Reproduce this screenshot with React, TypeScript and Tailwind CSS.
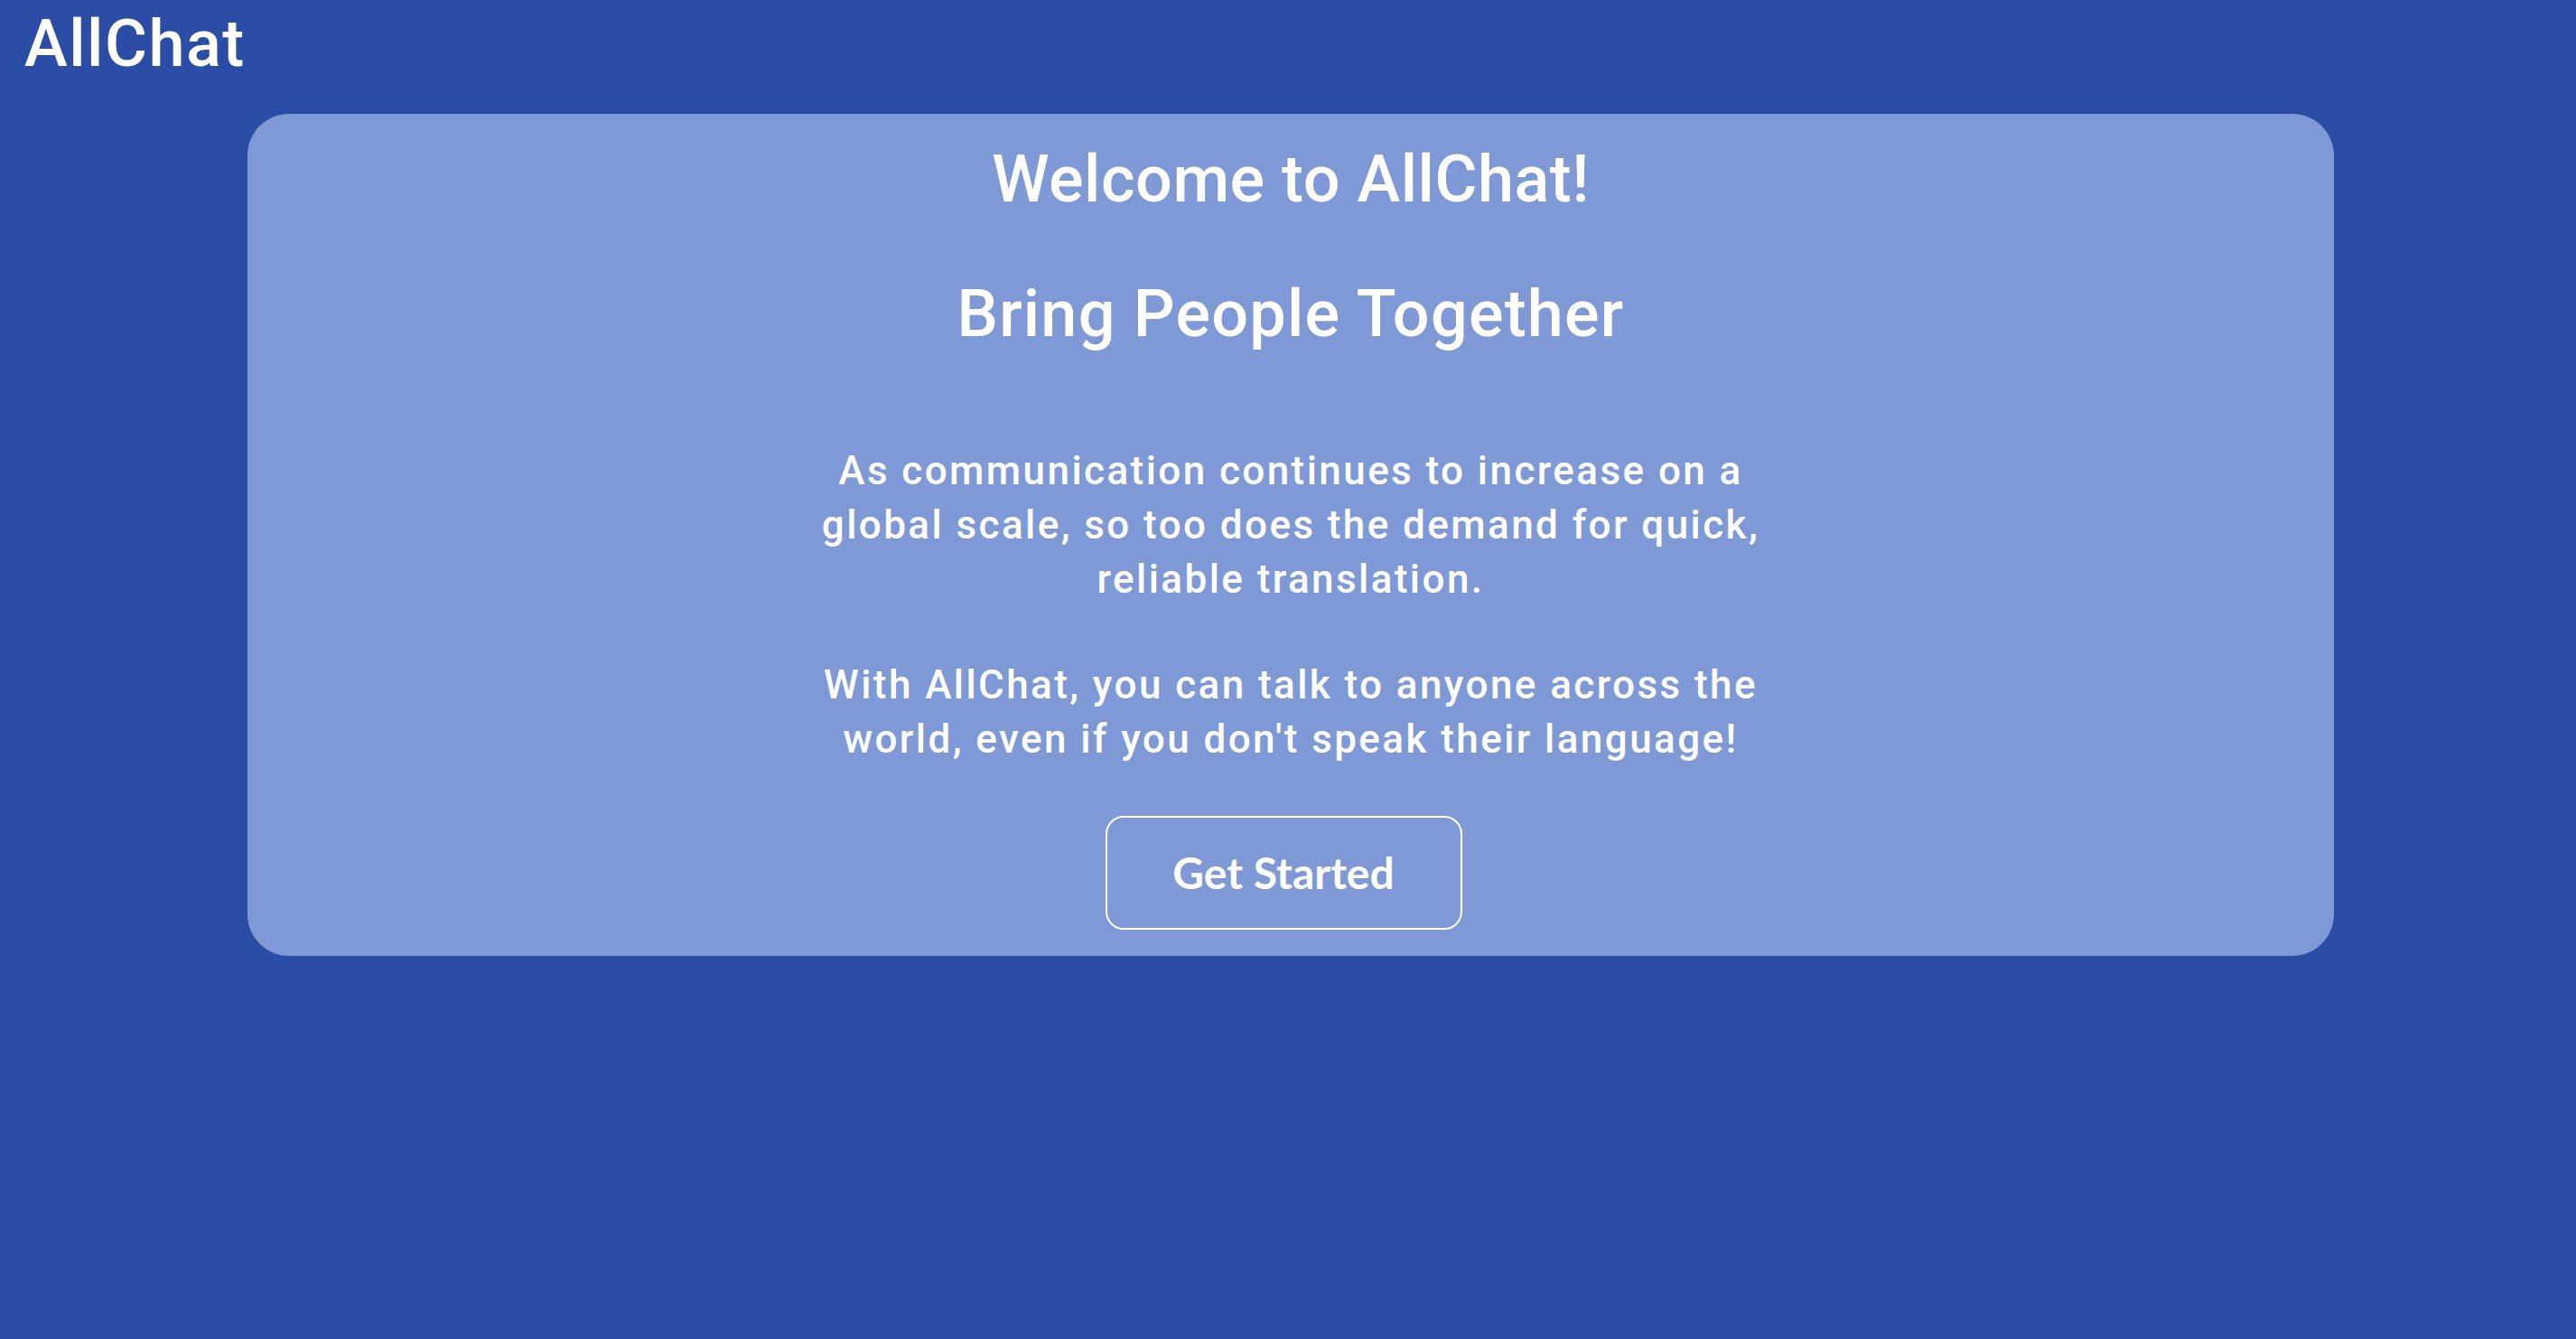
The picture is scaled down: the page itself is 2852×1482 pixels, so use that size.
import React from "react";

export default function App() {
  return (
    <div
      className="min-h-[1482px] w-full bg-[#2b4da5] text-white"
      style={{ fontFamily: "Roboto, 'Noto Sans', sans-serif" }}
    >
      <header className="pt-[13px] pl-[27px]">
        <div className="text-[72px] leading-[72px] font-medium tracking-[1.5px]">AllChat</div>
      </header>
      <main className="mt-[41px] ml-[274px] w-[2310px] rounded-[46px] bg-[#7e99d5] pt-[33px] pb-[29px] flex flex-col items-center">
        <h1 className="text-[72px] leading-[80px] font-medium tracking-[0.5px]">Welcome to AllChat!</h1>
        <h2 className="mt-[69px] text-[72px] leading-[80px] font-medium tracking-[1.2px]">Bring People Together</h2>
        <div className="mt-[103px] w-[1200px] text-center text-[44px] leading-[60px] font-medium tracking-[0.055em]">
          <p>
            As communication continues to increase on a<br />
            global scale, so too does the demand for quick,<br />
            reliable translation.
          </p>
          <p className="mt-[57px]">
            With AllChat, you can talk to anyone across the<br />
            world, even if you don't speak their language!
          </p>
        </div>
        <button
          className="mt-[55px] mr-[16px] w-[395px] h-[126px] rounded-[20px] border-2 border-white text-[48px] font-bold text-white"
          style={{ fontFamily: "Lato, 'Open Sans', sans-serif" }}
        >
          Get Started
        </button>
      </main>
    </div>
  );
}
